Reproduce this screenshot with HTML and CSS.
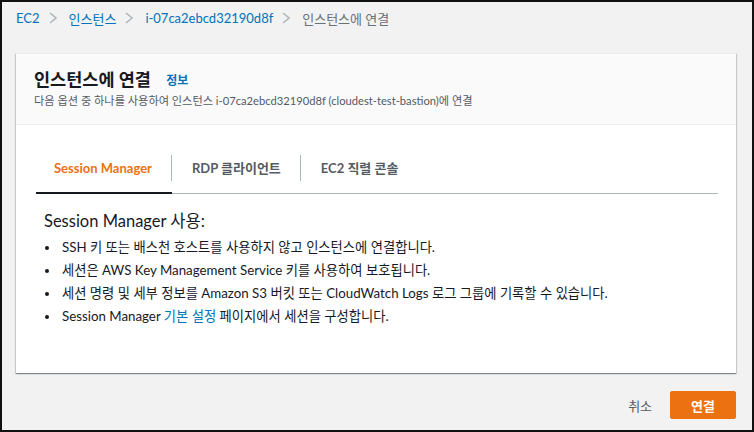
FILE: index.html
```html
<!DOCTYPE html>
<html lang="ko">
<head>
    <meta charset="UTF-8">
    <title>인스턴스에 연결</title>
    <link rel="stylesheet" href="styles.css">
</head>
<body>
    <div class="page">
        <nav class="breadcrumbs">
            <a href="#" class="crumb">EC2</a>
            <svg class="chevron" width="8" height="12" viewBox="0 0 8 12"><polyline points="1,1 7,6 1,11" /></svg>
            <a href="#" class="crumb">인스턴스</a>
            <svg class="chevron" width="8" height="12" viewBox="0 0 8 12"><polyline points="1,1 7,6 1,11" /></svg>
            <a href="#" class="crumb">i-07ca2ebcd32190d8f</a>
            <svg class="chevron" width="8" height="12" viewBox="0 0 8 12"><polyline points="1,1 7,6 1,11" /></svg>
            <span class="crumb current">인스턴스에 연결</span>
        </nav>

        <div class="card">
            <div class="card-header">
                <h1>인스턴스에 연결 <a href="#" class="info-link">정보</a></h1>
                <p class="subtitle">다음 옵션 중 하나를 사용하여 인스턴스 i-07ca2ebcd32190d8f (cloudest-test-bastion)에 연결</p>
            </div>

            <div class="card-body">
                <div class="tabs">
                    <button class="tab active"><span class="tab-label">Session Manager</span></button>
                    <button class="tab"><span class="tab-label">RDP 클라이언트</span></button>
                    <button class="tab"><span class="tab-label last">EC2 직렬 콘솔</span></button>
                </div>

                <h2 class="section-title">Session Manager 사용:</h2>
                <ul class="bullets">
                    <li>SSH 키 또는 배스천 호스트를 사용하지 않고 인스턴스에 연결합니다.</li>
                    <li>세션은 AWS Key Management Service 키를 사용하여 보호됩니다.</li>
                    <li>세션 명령 및 세부 정보를 Amazon S3 버킷 또는 CloudWatch Logs 로그 그룹에 기록할 수 있습니다.</li>
                    <li>Session Manager <a href="#">기본 설정</a> 페이지에서 세션을 구성합니다.</li>
                </ul>
            </div>
        </div>

        <div class="actions">
            <button class="btn btn-link">취소</button>
            <button class="btn btn-primary">연결</button>
        </div>
    </div>
</body>
</html>
```

FILE: styles.css
```css
* {
    margin: 0;
    padding: 0;
    box-sizing: border-box;
}

body {
    font-family: Lato, 'Noto Sans CJK KR', sans-serif;
    background: #f2f2f2;
    color: #16191f;
}

a {
    color: #0073bb;
    text-decoration: none;
}

.page {
    height: 432px;
    border: 2px solid #111;
    padding: 6px 16px 0 14px;
}

/* breadcrumbs */
.breadcrumbs {
    display: flex;
    align-items: center;
    height: 20px;
    font-size: 13px;
}

.chevron {
    margin: 0 12px 0 9px;
}

.chevron polyline {
    fill: none;
    stroke: #aab7b8;
    stroke-width: 1.5;
}

.crumb.current {
    color: #687078;
}

/* card */
.card {
    margin-top: 25px;
    background: white;
    border-top: 1px solid #eaeded;
    box-shadow: 0 1px 1px 0 rgba(0,28,36,0.3), 1px 1px 1px 0 rgba(0,28,36,0.15), -1px 1px 1px 0 rgba(0,28,36,0.15);
}

.card-header {
    background: #fafafa;
    padding: 14px 18px 15px;
    border-bottom: 1px solid #eaeded;
}

.card-header h1 {
    font-size: 17.5px;
    line-height: 24px;
    font-weight: bold;
}

.info-link {
    font-size: 12px;
    margin-left: 11px;
    vertical-align: 1px;
}

.subtitle {
    font-size: 11.2px;
    line-height: 16px;
    color: #545b64;
}

.card-body {
    padding: 22px 18px 45px 20px;
}

/* tabs */
.tabs {
    display: flex;
    border-bottom: 1px solid #aab7b8;
}

.tab {
    font-family: inherit;
    background: none;
    border: none;
    border-bottom: 2px solid transparent;
    margin-bottom: -1px;
    padding: 8px 0 11px;
    font-size: 13px;
    font-weight: bold;
    color: #545b64;
    cursor: pointer;
}

.tab.active {
    color: #ec7211;
    border-bottom-color: #16191f;
}

.tab-label {
    display: block;
    height: 26px;
    line-height: 26px;
    padding: 0 19px 0 20px;
    border-right: 1px solid #aab7b8;
}

.tab.active .tab-label {
    padding-left: 18px;
}

.tab-label.last {
    border-right: none;
}

/* content */
.section-title {
    margin-top: 16px;
    margin-left: 8px;
    font-size: 16.5px;
    line-height: 22px;
    font-weight: normal;
}

.bullets {
    list-style: none;
    margin-top: 4px;
    padding-left: 26px;
    font-size: 13.3px;
    line-height: 23px;
}

.bullets li {
    position: relative;
}

.bullets li::before {
    content: '';
    position: absolute;
    left: -17px;
    top: 10px;
    width: 4px;
    height: 4px;
    border-radius: 50%;
    background: #16191f;
}

/* footer actions */
.actions {
    display: flex;
    justify-content: flex-end;
    align-items: center;
    gap: 18px;
    margin-top: 18px;
}

.btn {
    font-family: inherit;
    font-size: 13px;
    height: 28px;
    border-radius: 2px;
    cursor: pointer;
}

.btn-link {
    background: none;
    border: none;
    color: #545b64;
}

.btn-primary {
    background: #ec7211;
    border: 1px solid #ec7211;
    color: white;
    font-weight: bold;
    padding: 0 20px;
}
```
